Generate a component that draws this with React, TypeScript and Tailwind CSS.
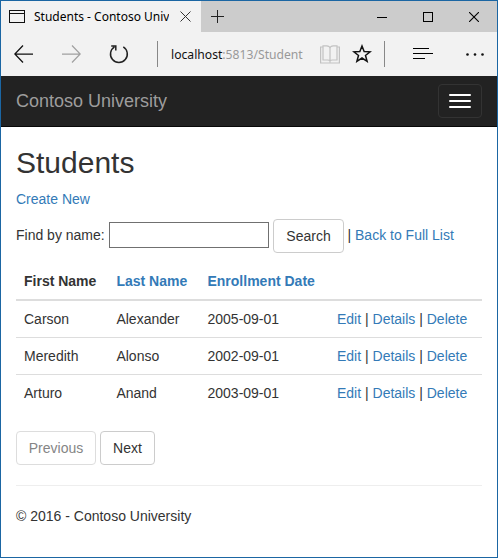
import React from "react";

const students = [
  { first: "Carson", last: "Alexander", date: "2005-09-01" },
  { first: "Meredith", last: "Alonso", date: "2002-09-01" },
  { first: "Arturo", last: "Anand", date: "2003-09-01" },
];

function Link({ children }: { children: React.ReactNode }) {
  return <a href="#" className="text-[#337ab7]">{children}</a>;
}

function TabStrip() {
  return (
    <div className="flex h-[31px] bg-[#cccccc] font-['Noto_Sans','Open_Sans',sans-serif]">
      <div className="flex w-[200px] items-center bg-[#f2f2f2] pl-2">
        <svg className="h-[13px] w-4 shrink-0" viewBox="0 0 16 13" fill="none" stroke="#111" shapeRendering="crispEdges">
          <path d="M.5 .5h15v12H.5zM0 3.500h16" />
        </svg>
        <div className="ml-[9px] w-[135px] shrink-0 overflow-hidden whitespace-nowrap text-[12px] leading-[18px] text-black">
          Students - Contoso Univ
        </div>
        <svg className="ml-[11px] h-[11px] w-[11px] shrink-0" viewBox="0 0 11 11" stroke="#333" strokeWidth="1">
          <path d="M.5 .5l10 10M10.500 .5l-10 10" />
        </svg>
      </div>
      <svg className="ml-[10px] mt-[9px] h-[13px] w-[13px]" viewBox="0 0 13 13" stroke="#222" shapeRendering="crispEdges">
        <path d="M6.500 0v13M0 6.500h13" />
      </svg>
      <div className="ml-auto mr-[18px] flex items-center gap-9">
        <svg className="h-[10px] w-[10px]" viewBox="0 0 10 10" stroke="#000" shapeRendering="crispEdges">
          <path d="M0 5.500h10" />
        </svg>
        <svg className="h-[10px] w-[10px]" viewBox="0 0 10 10" fill="none" stroke="#000" shapeRendering="crispEdges">
          <path d="M.5 .5h9v9h-9z" />
        </svg>
        <svg className="h-[10px] w-[10px]" viewBox="0 0 10 10" stroke="#000" strokeWidth="1.100">
          <path d="M0 0l10 10M10 0L0 10" />
        </svg>
      </div>
    </div>
  );
}

function Toolbar() {
  return (
    <div className="flex h-11 items-center bg-[#f2f2f2] pl-[13px] font-['Noto_Sans','Open_Sans',sans-serif]">
      <svg className="h-[18px] w-[19px] shrink-0" viewBox="0 0 19 18" fill="none" stroke="#111" strokeWidth="1.300">
        <path d="M9 .5L.8 9 9 17.500M.8 9.100H19" />
      </svg>
      <svg className="ml-[29px] h-[18px] w-[19px] shrink-0" viewBox="0 0 19 18" fill="none" stroke="#a0a0a0" strokeWidth="1.200">
        <path d="M10 .5L18.200 9 10 17.500M18.200 9.100H0" />
      </svg>
      <svg className="ml-7 h-[20px] w-[20px] shrink-0" viewBox="0 0 20 20" fill="none" stroke="#222" strokeWidth="1.500">
        <path d="M5.500 2.900A8.400 8.400 0 1 0 14.300 2.900M2.200 2H6.800V6.600" />
      </svg>
      <div className="ml-7 h-[26px] w-px shrink-0 bg-[#888888]" />
      <div className="ml-[13px] w-[149px] shrink-0 whitespace-nowrap text-[13px] leading-5 text-[#999999]">
        <span className="inline-block origin-left scale-x-[0.935]"><span className="text-[#111111]">localhost</span>:5813/Student</span>
      </div>
      <svg className="h-[19px] w-5 shrink-0" viewBox="0 0 20 19" fill="none" stroke="#c2c2c2" strokeWidth="1.200">
        <path d="M3 2H.6v16h18.800V2H17M3 .8h3.500Q10 1 10 3.500v12.300Q9.500 15 7.500 15H3zM17 .8h-3.500Q10 1 10 3.500v12.300Q10.500 15 12.500 15H17z" />
      </svg>
      <svg className="ml-3 h-[20px] w-5 shrink-0" viewBox="0 0 20 20" fill="none" stroke="#111" strokeWidth="1.500">
        <path d="M10 2l2.150 5.500 6 .3-4.650 3.700 1.600 5.800L10 14l-5.100 3.300 1.600-5.800L1.850 7.800l6-.3z" />
      </svg>
      <div className="ml-3 h-[26px] w-px shrink-0 bg-[#888888]" />
      <svg className="ml-7 h-3 w-5 shrink-0" viewBox="0 0 20 12" stroke="#000" shapeRendering="crispEdges">
        <path d="M0 .5h16M0 5.500h20M0 10.500h12" />
      </svg>
      <svg className="ml-[33px] h-[3px] w-[18px] shrink-0" viewBox="0 0 18 3" fill="#111">
        <circle cx="1.500" cy="1.500" r="1.300" />
        <circle cx="9" cy="1.500" r="1.300" />
        <circle cx="16.500" cy="1.500" r="1.300" />
      </svg>
    </div>
  );
}

function Navbar() {
  return (
    <nav className="flex h-[51px] items-center justify-between border-b border-[#080808] bg-[#222222] px-[15px]">
      <a href="#" className="text-[18px] leading-5 text-[#9d9d9d]">Contoso University</a>
      <button className="flex h-[34px] w-11 flex-col items-center justify-center gap-1 rounded-[4px] border border-[#333333]">
        <span className="h-[2px] w-[22px] rounded-[1px] bg-white" />
        <span className="h-[2px] w-[22px] rounded-[1px] bg-white" />
        <span className="h-[2px] w-[22px] rounded-[1px] bg-white" />
      </button>
    </nav>
  );
}

function StudentTable() {
  return (
    <table className="mt-3 w-full table-fixed border-collapse text-left">
      <colgroup>
        <col className="w-[92.400px]" />
        <col className="w-[91.100px]" />
        <col className="w-[129.500px]" />
        <col />
      </colgroup>
      <thead>
        <tr className="border-b-2 border-[#dddddd]">
          <th className="h-[35px] px-2 pb-2 pt-1.5 font-bold">First Name</th>
          <th className="px-2 pb-2 pt-1.5 font-bold"><Link>Last Name</Link></th>
          <th className="px-2 pb-2 pt-1.5 font-bold"><Link>Enrollment Date</Link></th>
          <th />
        </tr>
      </thead>
      <tbody>
        {students.map((s) => (
          <tr key={s.first} className="border-t border-[#dddddd]">
            <td className="p-2">{s.first}</td>
            <td className="p-2">{s.last}</td>
            <td className="p-2">{s.date}</td>
            <td className="whitespace-nowrap p-2">
              <Link>Edit</Link> | <Link>Details</Link> | <Link>Delete</Link>
            </td>
          </tr>
        ))}
      </tbody>
    </table>
  );
}

export default function App() {
  return (
    <div className="h-[558px] w-[498px] overflow-hidden border border-[#1b66a3] bg-white font-['Liberation_Sans',Arial,sans-serif] text-[14px] leading-5 text-[#333333]">
      <TabStrip />
      <Toolbar />
      <Navbar />
      <main className="px-[15px] pt-[19px]">
        <h2 className="text-[30px] leading-[33px]">Students</h2>
        <p className="mt-[10px]"><Link>Create New</Link></p>
        <form className="mt-[10px] flex h-[34px] items-center">
          <label htmlFor="search" className="mb-[2px] w-[93px]">Find by name:</label>
          <input id="search" className="mb-[2px] h-[26px] w-[160px] border border-[#707070] px-1" />
          <button type="button" className="ml-1 h-[34px] w-[71px] rounded-[4px] border border-[#cccccc]">Search</button>
          <span className="mb-[2px] ml-[3.500px] whitespace-nowrap">| <Link>Back to Full List</Link></span>
        </form>
        <StudentTable />
        <div className="mt-5 flex gap-1">
          <button className="h-[34px] w-20 rounded-[4px] border border-[#dddddd] text-[#858585]">Previous</button>
          <button className="h-[34px] w-[55px] rounded-[4px] border border-[#cccccc]">Next</button>
        </div>
        <hr className="mt-5 border-[#eeeeee]" />
        <footer className="mt-5">© 2016 - Contoso University</footer>
      </main>
    </div>
  );
}
